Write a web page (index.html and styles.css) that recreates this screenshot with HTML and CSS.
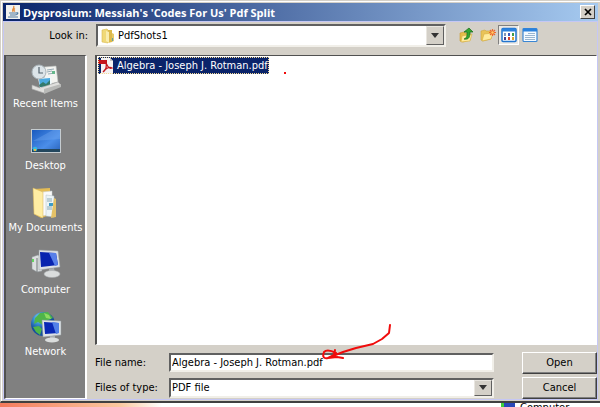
FILE: index.html
```
<!DOCTYPE html>
<html lang="en">
<head>
    <meta charset="UTF-8">
    <meta name="viewport" content="width=device-width, initial-scale=1.0">
    <title>Dysprosium: Messiah's 'Codes For Us' Pdf Split</title>
    <link rel="stylesheet" href="styles.css">
</head>
<body>
    <div class="dialog">
        <header class="titlebar">
            <svg class="java-icon" viewBox="0 0 14 14">
                <rect width="14" height="14" fill="#f1f1ee"/>
                <path d="M7.500 1c2 2-2.500 3-.5 6M9 3.500c-1.500 1-1.500 2 0 3" fill="none" stroke="#e58a3a" stroke-width="1.300"/>
                <path d="M3 8h7M4 10h5M2 12h10M10 8c3-1 2 2-1 2" fill="none" stroke="#527aa0" stroke-width="1.200"/>
            </svg>
            <h1 class="title">Dysprosium: Messiah's 'Codes For Us' Pdf Split</h1>
            <button class="close" aria-label="Close">
                <svg viewBox="0 0 8 8" width="8" height="8"><path d="M1 1l6 6M7 1L1 7" stroke="#000" stroke-width="1.700"/></svg>
            </button>
        </header>

        <main class="client">
            <div class="toolbar">
                <label class="look-label" for="look">Look in:</label>
                <div class="combo look-combo">
                    <svg class="folder-icon" viewBox="0 0 14 16">
                        <path d="M1 2l5-1 1 1v13l-6-1z" fill="#f0d977" stroke="#d8bb52" stroke-width=".6"/>
                        <path d="M7 2h4v12l-4 1z" fill="#dcb94c"/>
                        <path d="M5 3l3 1v11l-3-2z" fill="#f9edae"/>
                        <path d="M11 5l2 1v7l-2 1z" fill="#e5c968"/>
                        <path d="M11.500 10v3" stroke="#5ba0a8"/>
                    </svg>
                    <select id="look"><option>PdfShots1</option></select>
                    <span class="arrow"></span>
                </div>
                <div class="tools">
                    <button class="tool" aria-label="Up one level">
                        <svg viewBox="0 0 16 16">
                            <path d="M1 6l4-1 1 1h5v7l-7 2-3-1z" fill="#e5bd48" stroke="#c99c30" stroke-width=".6"/>
                            <path d="M3 9l10-2-2 7-9 1z" fill="#ffeb9c" stroke="#d5ac40" stroke-width=".6"/>
                            <path d="M5 12c3-1 3-3 3-7H5l5-4 4 4h-3c0 5-1 8-6 7z" fill="#33a52f" stroke="#176b1a" stroke-width=".7"/>
                        </svg>
                    </button>
                    <button class="tool" aria-label="Create new folder">
                        <svg viewBox="0 0 16 16">
                            <path d="M1 4l4-1 1 1h5v8l-8 2-2-1z" fill="#e9c358" stroke="#cfa640" stroke-width=".6"/>
                            <path d="M4 7l9-1-2 6-9 2z" fill="#ffeb9c" stroke="#d5ac40" stroke-width=".6"/>
                            <path d="M12.500 2v7M9 5.500h7M10 3l5 5M15 3l-5 5" stroke="#f06a2c" stroke-width="1.200"/>
                            <circle cx="12.500" cy="5.500" r="1.200" fill="#ffd06a"/>
                        </svg>
                    </button>
                    <button class="tool pressed" aria-label="List" aria-pressed="true">
                        <svg viewBox="0 0 16 16">
                            <rect x="1" y="1.500" width="14" height="13" rx="1" fill="#fff" stroke="#2275cf" stroke-width="1.500"/>
                            <path d="M1 3h14" stroke="#2b82dd" stroke-width="3"/>
                            <path d="M4 6v3" stroke="#7c97bc" stroke-width="2"/>
                            <path d="M8 6v3" stroke="#3c59bd" stroke-width="2"/>
                            <path d="M12 6v3" stroke="#3f9b4b" stroke-width="2"/>
                            <path d="M4 10v3" stroke="#3f3f8e" stroke-width="2"/>
                            <path d="M8 10v3" stroke="#d9432b" stroke-width="2"/>
                            <path d="M12 10v3" stroke="#dba42e" stroke-width="2"/>
                        </svg>
                    </button>
                    <button class="tool" aria-label="Details" aria-pressed="false">
                        <svg viewBox="0 0 16 16">
                            <rect x="1" y="1.500" width="14" height="13" rx="1" fill="#f4faff" stroke="#3a86d3" stroke-width="1.200"/>
                            <path d="M1 3h14" stroke="#2b82dd" stroke-width="3"/>
                            <path d="M6 6.500h7M3 8.500h10M3 10.500h10M3 12.500h10" stroke="#8fadc9" stroke-width=".9"/>
                        </svg>
                    </button>
                </div>
            </div>

            <nav class="places">
                <button class="place">
                    <svg viewBox="0 0 32 32">
                        <path d="M14 4l12-1 2 16-13 3z" fill="#f4f4f1" stroke="#b9bdbb" stroke-width=".6"/>
                        <path d="M17 7l7-1M17 9l5-1M18 11l7-1" stroke="#98acb5"/>
                        <rect x="22" y="8" width="3" height="3" fill="#66b88c"/>
                        <path d="M8 15l13-1 1 10-12 1z" fill="#eef8fb"/>
                        <path d="M9 16l11-1v8l-10 1z" fill="#4ba9df"/>
                        <path d="M9 22l4-3 3 2 4-4v6l-10 1z" fill="#337a6b"/>
                        <circle cx="9" cy="9" r="7" fill="#dce4e8" stroke="#a9b3b8"/>
                        <path d="M9 4v6h4" fill="none" stroke="#53626c" stroke-width="1.200"/>
                        <path d="M2 22l8 3 18-6 3 3-17 8-12-4z" fill="#e0e0de" stroke="#aaa" stroke-width=".6"/>
                        <path d="M14 26l17-5v3l-17 7z" fill="#b8b9b7"/>
                    </svg>
                    Recent Items
                </button>
                <button class="place">
                    <svg viewBox="0 0 32 32">
                        <defs><linearGradient id="screen" x2="1" y2="1"><stop stop-color="#1758bd"/><stop offset=".6" stop-color="#4b8ee9"/><stop offset="1" stop-color="#2861b9"/></linearGradient></defs>
                        <rect x="1.500" y="4.500" width="29" height="23" fill="url(#screen)" stroke="#c5ccd0"/>
                        <path d="M3 16L23 5h7v9z" fill="#78adf0" opacity=".35"/>
                        <rect x="2" y="24" width="28" height="3" fill="#23475e"/>
                        <circle cx="5" cy="24" r="2.300" fill="#36bada"/>
                        <path d="M4 24h2v2H4z" fill="#eeb640"/>
                    </svg>
                    Desktop
                </button>
                <button class="place">
                    <svg viewBox="0 0 32 32">
                        <path d="M4 2l16-1v27l-9 3-7-4z" fill="#e4bc55"/>
                        <path d="M12 5l10-1v23l-10 2z" fill="#fafafa" stroke="#c9d0d0" stroke-width=".5"/>
                        <path d="M16 8l8 1v21l-8-1z" fill="#edf4f6" stroke="#b2c3c9" stroke-width=".5"/>
                        <path d="M17 12h5M17 14h5M17 20h5M17 22h5" stroke="#8baab6"/>
                        <path d="M19 16h4v3h-4z" fill="#3c9cc7"/>
                        <path d="M3 1l10 4v26L4 27z" fill="#ffeda3" stroke="#d7b356" stroke-width=".5"/>
                        <path d="M24 11l2 1v18l-5 1z" fill="#e4c167"/>
                    </svg>
                    My Documents
                </button>
                <button class="place">
                    <svg viewBox="0 0 32 32">
                        <path d="M2 8l6-2 4 2v14l-5 1-5-3z" fill="#dcdfe0" stroke="#8d9598" stroke-width=".5"/>
                        <path d="M7 9v14" stroke="#73797b"/>
                        <path d="M3 10v3" stroke="#41d23b" stroke-width="1.500"/>
                        <path d="M9 1l19 1 2 16-21 3z" fill="#dce1e6" stroke="#9ba1a5" stroke-width=".5"/>
                        <path d="M10 3l16 1 2 12-17 2z" fill="#0824af"/>
                        <path d="M19 4l7 0 2 12-3 1z" fill="#577fe9"/>
                        <path d="M19 20l5-1 1 5h-6z" fill="#a8adb0"/>
                        <ellipse cx="22" cy="25" rx="8" ry="3.500" fill="#dadddd" stroke="#a6abac" stroke-width=".5"/>
                    </svg>
                    Computer
                </button>
                <button class="place">
                    <svg viewBox="0 0 32 32">
                        <defs><radialGradient id="globe" cx=".35" cy=".25"><stop stop-color="#9ee6ff"/><stop offset=".5" stop-color="#398fd1"/><stop offset="1" stop-color="#164f9d"/></radialGradient></defs>
                        <circle cx="13" cy="13" r="12" fill="url(#globe)"/>
                        <path d="M10 2l8-1 5 6-7 3-3 4-5-3-4 2 1-6zM3 16l6-1 3 3-2 6-4-3z" fill="#4fb549"/>
                        <path d="M14 2l5 2 2 4-5-1z" fill="#8edc61"/>
                        <path d="M12 9l19 1v14l-18 2z" fill="#dde2e5" stroke="#90989c" stroke-width=".5"/>
                        <path d="M14 11l15 1v10l-14 1z" fill="#0928b5"/>
                        <path d="M22 11l7 1v10l-3 1z" fill="#5280e8"/>
                        <path d="M20 25h5v3h-5z" fill="#a8adb0"/>
                        <ellipse cx="22" cy="29" rx="7" ry="2.600" fill="#dadddd"/>
                    </svg>
                    Network
                </button>
            </nav>

            <ul class="files">
                <li class="file selected">
                    <svg class="pdf-icon" viewBox="0 0 16 16">
                        <path d="M3 0h9l3 3v13H3z" fill="#f5f3f3"/>
                        <path d="M12 0v3h3z" fill="#c6c6c6"/>
                        <path d="M0 2h9v4H0z" fill="#c4161c"/>
                        <path d="M8 5c2 4 3 6 6 5-3-2-7 1-9 4 3-2 4-6 3-9z" fill="none" stroke="#c4161c" stroke-width="1.300"/>
                    </svg>
                    <span>Algebra - Joseph J. Rotman.pdf</span>
                </li>
            </ul>
            <span class="dot"></span>

            <form class="fields">
                <label for="name">File name:</label>
                <div class="name-field">
                    <input type="text" id="name" value="Algebra - Joseph J. Rotman.pdf">
                    <svg class="scribble" viewBox="0 0 80 42">
                        <path d="M73 2l-1 8-7 6-9 5-17 4-13 4-15 6c-4 1-6-1-4-6 3-3 8-1 12 1M18 27l-1 5-6 3M11 35l9-1 6 1" fill="none" stroke="#f00c0c" stroke-width="2" stroke-linecap="round" stroke-linejoin="round"/>
                    </svg>
                </div>
                <button type="button" class="action">Open</button>
                <label for="type">Files of type:</label>
                <div class="combo type-combo">
                    <select id="type"><option>PDF file</option></select>
                    <span class="arrow"></span>
                </div>
                <button type="button" class="action">Cancel</button>
            </form>
        </main>
    </div>
    <footer class="behind">
        <span class="behind-icon"></span>
        <span class="behind-label">Computer</span>
    </footer>
</body>
</html>
```

FILE: styles.css
```
* {
    box-sizing: border-box;
}
body {
    margin: 0;
    min-height: 100vh;
    display: flex;
    flex-direction: column;
    background: #d4d0c8;
    color: #000;
    font-family: Tahoma, "DejaVu Sans Condensed", sans-serif;
    font-size: 11px;
}
button, input, select {
    font: inherit;
    color: inherit;
    margin: 0;
    border-radius: 0;
}
svg {
    display: block;
}
.dialog {
    flex: 1;
    display: flex;
    flex-direction: column;
    padding: 2px 2px 1px 2px;
    border-top: 1px solid #d4d0c8;
    border-left: 1px solid #d4d0c8;
    border-bottom: 2px solid #404040;
    box-shadow: inset 1px 1px #fff;
}
.titlebar {
    display: flex;
    align-items: center;
    gap: 3px;
    height: 18px;
    padding: 0 3px;
    background: linear-gradient(to right, #0a246a, #a6caf0);
    color: #fff;
}
.java-icon {
    width: 14px;
    height: 14px;
}
.title {
    flex: 1;
    margin: 0;
    font-family: Tahoma, "Open Sans", sans-serif;
    font-size: 11px;
    white-space: nowrap;
}
.close {
    display: flex;
    align-items: center;
    justify-content: center;
    width: 15px;
    height: 14px;
    padding: 0;
    background: #d4d0c8;
    border: 1px solid;
    border-color: #fff #404040 #404040 #fff;
}
.client {
    position: relative;
    flex: 1;
    display: grid;
    grid-template-columns: 83px 1fr;
    grid-template-rows: auto 1fr auto;
    column-gap: 8px;
    border: 1px solid #c5c7f5;
    background: #d4d0c8;
}
.toolbar {
    grid-column: 1 / 3;
    display: flex;
    align-items: center;
    height: 33px;
    padding: 0 57px 7px 0;
}
.look-label {
    width: 92px;
    padding-right: 8px;
    text-align: right;
}
.combo {
    position: relative;
    display: flex;
    background: #fff;
    border: 2px solid;
    border-color: #606060 #f1efe9 #f1efe9 #606060;
}
.combo select {
    width: 100%;
    padding: 0 20px 0 1px;
    border: none;
    background: none;
    appearance: none;
    outline: none;
}
.look-combo {
    flex: 1;
    height: 23px;
}
.look-combo select {
    padding-left: 20px;
}
.folder-icon {
    position: absolute;
    left: 3px;
    top: 2px;
    width: 14px;
    height: 16px;
}
.arrow {
    position: absolute;
    top: 0;
    right: 0;
    bottom: 0;
    width: 18px;
    display: flex;
    align-items: center;
    justify-content: center;
    background: #d4d0c8;
    border: 1px solid;
    border-color: #e9e6e0 #606060 #606060 #e9e6e0;
    pointer-events: none;
}
.arrow::after {
    content: "";
    border: 4px solid transparent;
    border-top: 5px solid #333;
    border-bottom: none;
}
.tools {
    display: flex;
    margin-left: 10px;
}
.tool {
    display: flex;
    align-items: center;
    justify-content: center;
    width: 21px;
    height: 20px;
    padding: 0;
    border: 1px solid transparent;
    background: none;
}
.tool svg {
    width: 16px;
    height: 16px;
}
.tool.pressed {
    background: #ebe9e4;
    border-color: #808080 #fff #fff #808080;
}
.places {
    grid-row: 2 / 4;
    display: flex;
    flex-direction: column;
    background: #808080;
    border: 1px solid;
    border-color: #505050 #fff #fff #505050;
    border-width: 1px 2px 1px 2px;
}
.place {
    display: flex;
    flex-direction: column;
    align-items: center;
    gap: 2px;
    height: 62px;
    padding: 7px 0 0;
    border: none;
    background: none;
    color: #fff;
    white-space: nowrap;
}
.place svg {
    width: 32px;
    height: 32px;
}
.files {
    margin: 0;
    padding: 1px;
    list-style: none;
    background: #fff;
    border: 1px solid;
    border-color: #505050 #fff #fff #505050;
    border-left-width: 2px;
}
.file {
    display: inline-flex;
    align-items: center;
    gap: 3px;
    height: 17px;
    padding-right: 1px;
    white-space: nowrap;
}
.file.selected {
    background: #0a246a;
    color: #fff;
    outline: 1px dotted #f5db95;
    outline-offset: -1px;
}
.pdf-icon {
    width: 16px;
    height: 16px;
}
/* pen marks */
.dot {
    position: absolute;
    left: 280px;
    top: 50px;
    width: 2px;
    height: 2px;
    background: #f00c0c;
}
.scribble {
    position: absolute;
    left: 148px;
    top: -30px;
    width: 80px;
    height: 42px;
    pointer-events: none;
}
.fields {
    display: grid;
    grid-template-columns: 74px 1fr 75px;
    grid-template-rows: 23px 23px;
    row-gap: 2px;
    align-items: center;
    padding-top: 6px;
}
.name-field {
    position: relative;
    margin-right: 28px;
}
.name-field input {
    display: block;
    width: 100%;
    height: 19px;
    padding: 0 1px;
    background: #fff;
    border: 2px solid;
    border-color: #606060 #f1efe9 #f1efe9 #606060;
    outline: none;
}
.type-combo {
    height: 20px;
    margin-right: 28px;
}
.action {
    height: 22px;
    padding: 0;
    background: #d4d0c8;
    border: 1px solid;
    border-color: #fff #404040 #404040 #fff;
    box-shadow: inset -1px -1px #808080;
}
/* strip of the desktop below the dialog */
.behind {
    display: flex;
    gap: 5px;
    height: 4px;
    padding-left: 501px;
    overflow: hidden;
    background: linear-gradient(to right, #f47a5c, #fbc9a0 20%, #fff 27%);
}
.behind-icon {
    width: 14px;
    height: 4px;
    border-left: 3px solid #3fd03a;
    background: #2a48b8;
}
.behind-label {
    line-height: 9px;
}
```
